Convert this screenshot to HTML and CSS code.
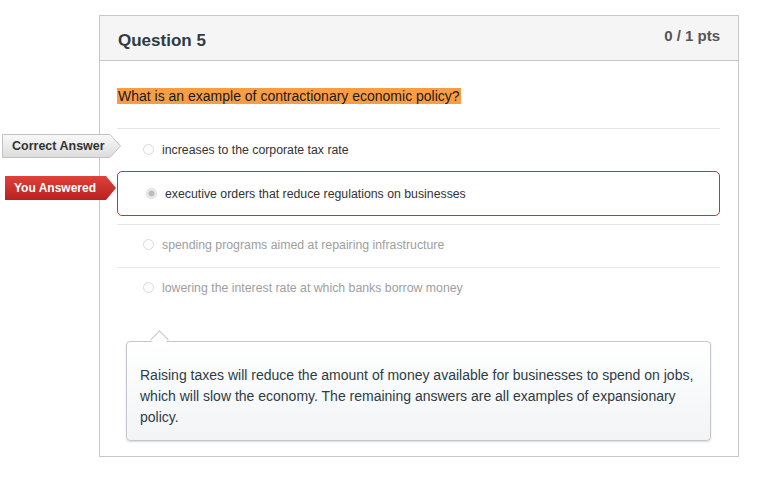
FILE: index.html
```html
<!DOCTYPE html>
<html>
<head>
<meta charset="utf-8">
<link rel="stylesheet" href="styles.css">
</head>
<body>
<div class="page">
  <div class="question">
    <div class="header">
      <div class="title">Question 5</div>
      <div class="pts">0 / 1 pts</div>
    </div>
    <div class="content">
      <div class="qtext"><span class="hl">What is an example of contractionary economic policy?</span></div>
      <div class="answers">
        <div class="answer correct">
          <span class="radio"></span><span class="atext">increases to the corporate tax rate</span>
          <div class="flag flag-correct">
            <svg class="flag-bg" width="120" height="24" viewBox="0 0 120 24">
              <defs>
                <linearGradient id="gg" x1="0" y1="0" x2="0" y2="1">
                  <stop offset="0" stop-color="#f9f9f9"/>
                  <stop offset="1" stop-color="#dcdcdc"/>
                </linearGradient>
              </defs>
              <polygon points="0.5,0.5 108,0.5 118.5,12 108,23.5 0.5,23.5" fill="url(#gg)" stroke="#c2c2c2"/>
            </svg>
            <span class="flag-text">Correct Answer</span>
          </div>
        </div>
        <div class="answer wrong">
          <span class="radio checked"></span><span class="atext">executive orders that reduce regulations on businesses</span>
          <div class="flag flag-wrong">
            <svg class="flag-bg" width="112" height="25" viewBox="0 0 112 25">
              <defs>
                <linearGradient id="rg" x1="0" y1="0" x2="0" y2="1">
                  <stop offset="0" stop-color="#e0413a"/>
                  <stop offset="1" stop-color="#b8211f"/>
                </linearGradient>
              </defs>
              <polygon points="0,0 101,0 111,12 101,24 0,24" fill="url(#rg)"/>
            </svg>
            <span class="flag-text">You Answered</span>
          </div>
        </div>
        <div class="answer dim line">
          <span class="radio"></span><span class="atext">spending programs aimed at repairing infrastructure</span>
        </div>
        <div class="answer dim line">
          <span class="radio"></span><span class="atext">lowering the interest rate at which banks borrow money</span>
        </div>
      </div>
      <div class="comment">
        <p>Raising taxes will reduce the amount of money available for businesses to spend on jobs, which will slow the economy. The remaining answers are all examples of expansionary policy.</p>
      </div>
    </div>
  </div>
</div>
</body>
</html>
```

FILE: styles.css
```css
* { box-sizing: border-box; }
html, body {
  margin: 0;
  padding: 0;
  background: #fff;
  font-family: "Liberation Sans", Arial, sans-serif;
  color: #2d3b45;
}
.page {
  padding: 15px 0 0 99px;
}
.question {
  width: 640px;
  height: 442px;
  border: 1px solid #c7c7c7;
}
.header {
  height: 45px;
  background: #f5f5f5;
  border-bottom: 1px solid #c7c7c7;
  display: flex;
  justify-content: space-between;
  align-items: flex-start;
  padding: 0 18px 0 18px;
}
.title {
  font-size: 17px;
  font-weight: bold;
  color: #2d3b45;
  margin-top: 15px;
}
.pts {
  font-size: 15px;
  font-weight: bold;
  color: #555;
  margin-top: 11px;
}
.content {
  padding: 0 18px 0 17px;
}
.qtext {
  margin-top: 27px;
  height: 40px;
  font-size: 14px;
  line-height: 17px;
}
.hl {
  background: #f99d45;
  color: #1a1a1a;
  padding: 0 1px;
}
.answers {
  border-top: 1px solid #e6e6e6;
}
.answer {
  position: relative;
  display: flex;
  align-items: center;
  font-size: 12.3px;
  color: #333;
}
.answer.correct {
  height: 42px;
  padding-left: 26px;
}
.answer.wrong {
  height: 45px;
  border: 1px solid #cc2f36;
  border-radius: 5px;
  padding-left: 28px;
  margin-bottom: 8px;
}
.answer.wrong .atext { margin-top: 1px; }
.answer.line {
  height: 43px;
  border-top: 1px solid #e8e8e8;
  padding-left: 26px;
}
.answer.line .atext { margin-top: -2px; }
.answer.line .radio { margin-top: -3px; }
.answer.dim { color: #9e9e9e; }
.radio {
  width: 11px;
  height: 11px;
  border-radius: 50%;
  border: 1px solid #dcdcdc;
  background: #fdfdfd;
  margin-right: 8px;
  flex: none;
}
.answer.correct .radio { margin-top: -1px; }
.radio.checked {
  background: radial-gradient(circle, #bdbdbd 0, #bdbdbd 2.5px, #e8e8e8 3.5px, #f5f5f5 5px);
  border-color: #dcdcdc;
  margin-right: 8px;
}
.flag {
  position: absolute;
  display: flex;
  align-items: center;
}
.flag-bg {
  position: absolute;
  left: 0;
  top: 0;
}
.flag-text {
  position: relative;
  font-size: 12.5px;
  font-weight: bold;
}
.flag-correct {
  left: -115px;
  top: 5px;
  width: 120px;
  height: 24px;
  padding-left: 10px;
  color: #333;
}
.flag-wrong {
  left: -113px;
  top: 4px;
  width: 112px;
  height: 25px;
  padding-left: 9px;
  color: #fff;
}
.flag-wrong .flag-text { font-size: 12px; margin-top: -1px; }
.comment {
  position: relative;
  margin: 31px 9px 0 9px;
  height: 100px;
  border: 1px solid #c4c8cc;
  border-radius: 4px;
  background: linear-gradient(#ffffff, #f2f4f5);
  box-shadow: 0 1px 2px rgba(0,0,0,0.15);
  padding: 23px 13px 0 13px;
}
.comment::before {
  content: "";
  position: absolute;
  left: 26px;
  top: -9px;
  width: 12px;
  height: 12px;
  background: #fff;
  border-left: 1px solid #c4c8cc;
  border-top: 1px solid #c4c8cc;
  transform: rotate(45deg);
}
.comment p {
  margin: 0;
  font-size: 14px;
  line-height: 21px;
  color: #2d3b45;
}
```
